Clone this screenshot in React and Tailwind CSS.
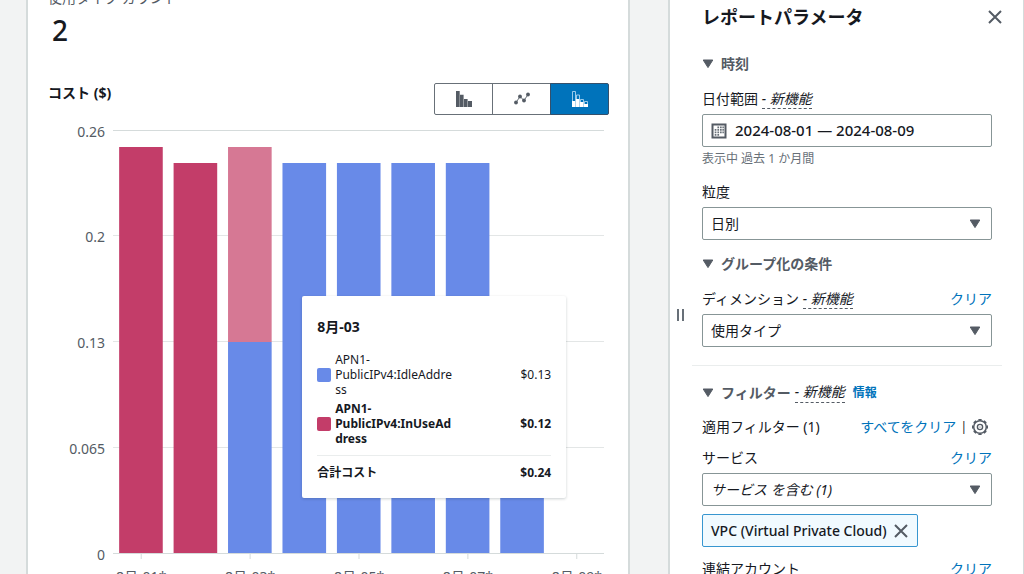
import React from "react";

const PLOT_TOP = 10;
const PLOT_BOTTOM = 433;
const STEP = 100 / 9;

const ticks = [
  { label: "0.26", y: 10 },
  { label: "0.2", y: 115 },
  { label: "0.13", y: 221 },
  { label: "0.065", y: 327 },
  { label: "0", y: 433 },
];

const IN_USE = "#c33d69";
const IDLE = "#688ae8";

const days = [
  { label: "8月-01*", parts: [{ top: 27, bottom: 433, color: IN_USE }] },
  { label: "8月-02*", parts: [{ top: 43, bottom: 433, color: IN_USE }] },
  {
    label: "8月-03*",
    parts: [
      { top: 27, bottom: 222, color: "#d67894" },
      { top: 222, bottom: 433, color: IDLE },
    ],
  },
  { label: "8月-04*", parts: [{ top: 43, bottom: 433, color: IDLE }] },
  { label: "8月-05*", parts: [{ top: 43, bottom: 433, color: IDLE }] },
  { label: "8月-06*", parts: [{ top: 43, bottom: 433, color: IDLE }] },
  { label: "8月-07*", parts: [{ top: 43, bottom: 433, color: IDLE }] },
  { label: "8月-08*", parts: [{ top: 280, bottom: 433, color: IDLE }] },
  { label: "8月-09*", parts: [] },
];

function Caret({ className = "" }) {
  return (
    <svg viewBox="0 0 12 10" className={`h-[10px] w-3 shrink-0 fill-[#545b64] ${className}`} aria-hidden="true">
      <path d="M1.2 1h9.6L6 8.6z" stroke="#545b64" strokeLinejoin="round" />
    </svg>
  );
}

function Cross({ className = "" }) {
  return (
    <svg viewBox="0 0 16 16" className={className} fill="none" stroke="#545b64" strokeWidth="2" aria-hidden="true">
      <path d="M2 2l12 12M14 2L2 14" />
    </svg>
  );
}

function NewFeature() {
  return (
    <span className="border-b border-dashed border-[#545b64] font-normal italic text-[#16191f]">- 新機能</span>
  );
}

function ClearLink({ children = "クリア" }) {
  return (
    <a href="#clear" className="text-[#0073bb]">
      {children}
    </a>
  );
}

function SectionTitle({ children, className = "" }) {
  return (
    <h3 className={`flex items-center gap-[7px] font-bold leading-5 text-[#545b64] ${className}`}>
      <Caret />
      <span className="flex items-center gap-1">{children}</span>
    </h3>
  );
}

function SelectBox({ id, value, italic }) {
  return (
    <div className="relative mt-[5px]">
      <select
        id={id}
        className={`block h-[33px] w-full appearance-none rounded-[2px] border border-[#879596] bg-white px-2 text-[#16191f] ${italic ? "italic" : ""}`}
      >
        <option>{value}</option>
      </select>
      <Caret className="pointer-events-none absolute right-[11px] top-[12px]" />
    </div>
  );
}

function CalendarIcon() {
  return (
    <svg viewBox="0 0 16 16" className="size-4 shrink-0" fill="none" aria-hidden="true">
      <rect x="1.5" y="1.5" width="13" height="13" stroke="#545b64" strokeWidth="2" />
      <g fill="#687078">
        <path d="M6.4 3.6h1.7v1.7H6.4zM9 3.6h1.7v1.7H9zM11.4 3.6h1.5v1.7h-1.5zM3.7 6.1h1.7v1.7H3.7zM6.4 6.1h1.7v1.7H6.4zM9 6.1h1.7v1.7H9zM11.4 6.1h1.5v1.7h-1.5zM3.7 8.6h1.7v1.7H3.7zM6.4 8.6h1.7v1.7H6.4zM9 8.6h1.7v1.7H9zM11.4 8.6h1.5v1.7h-1.5zM3.7 11.1h1.7v1.7H3.7zM6.4 11.1h1.7v1.7H6.4z" />
      </g>
    </svg>
  );
}

function GearIcon() {
  const teeth = [0, 45, 90, 135, 180, 225, 270, 315];
  return (
    <svg viewBox="0 0 18 18" className="size-[18px]" fill="none" stroke="#545b64" aria-hidden="true">
      <circle cx="9" cy="9" r="6.3" strokeWidth="1.5" />
      {teeth.map((a) => (
        <path key={a} d="M8 1.8h2" strokeWidth="1.6" strokeLinecap="round" transform={`rotate(${a} 9 9)`} />
      ))}
      <circle cx="9" cy="9" r="2.6" strokeWidth="1.4" />
      <circle cx="9" cy="9" r="0.6" fill="#545b64" stroke="none" />
    </svg>
  );
}

function BarsIcon() {
  return (
    <svg viewBox="0 0 16 16" className="size-4" fill="#545b64" aria-hidden="true">
      <path d="M0 0h3.7v16H0zM4 3.8h3.6v12.2H4zM8 8h3.6v8H8zM12 10h4v6h-4z" />
    </svg>
  );
}

function LineIcon() {
  return (
    <svg viewBox="0 0 16 16" className="size-4" fill="#545b64" aria-hidden="true">
      <path d="M2 11.5L6 5.5l4 4 4-6" fill="none" stroke="#687078" strokeWidth="1" />
      <circle cx="2" cy="11.5" r="1.9" />
      <circle cx="6" cy="5.5" r="1.9" />
      <circle cx="10" cy="9.5" r="1.9" />
      <circle cx="14" cy="3.5" r="1.9" />
    </svg>
  );
}

function StackIcon() {
  return (
    <svg viewBox="0 0 16 16" className="size-4" fill="none" aria-hidden="true">
      <path d="M.5 10V.5h3V10M4.5 8V4h3v4M8.500 11.500V8.500h3v3M12.500 13.500v-3h3v3" stroke="#a9d2ee" strokeWidth="0.9" />
      <path d="M0 10h3.7v6H0zM4 8h3.7v8H4zM8 11h3.7v5H8zM12 13h4v3h-4z" fill="#fff" />
    </svg>
  );
}

function ChartTypes() {
  return (
    <div className="flex" role="group" aria-label="グラフの種類">
      <button aria-label="棒" className="flex h-8 w-[59px] items-center justify-center rounded-l-[2px] border border-[#687078] bg-white">
        <BarsIcon />
      </button>
      <button aria-label="折れ線" className="-ml-px flex h-8 w-[59px] items-center justify-center border border-[#687078] bg-white">
        <LineIcon />
      </button>
      <button aria-label="積み重ね" className="-ml-px flex h-8 w-[59px] items-center justify-center rounded-r-[2px] border border-[#35506b] bg-[#0073bb]">
        <StackIcon />
      </button>
    </div>
  );
}

function TooltipRow({ color, name, value, bold }) {
  return (
    <li className={`mb-1 flex items-center ${bold ? "font-bold" : ""}`}>
      <span className={`mr-1 size-[14px] shrink-0 rounded-[2px] ${color}`} />
      <span className="w-[122px] break-words">{name}</span>
      <span className="ml-auto">{value}</span>
    </li>
  );
}

function Tooltip() {
  return (
    <div
      role="tooltip"
      className="absolute left-[38.4%] top-[176px] w-[264px] rounded-[2px] bg-white px-[15px] pb-[18px] pt-[21px] text-xs leading-[15px] text-[#16191f] shadow-[0_1px_3px_rgba(0,28,36,0.2)]"
    >
      <h4 className="mb-[15px] text-sm font-bold leading-5">8月-03</h4>
      <ul>
        <TooltipRow color="bg-[#688ae8]" name="APN1-PublicIPv4:IdleAddress" value="$0.13" />
        <TooltipRow color="bg-[#c33d69]" name="APN1-PublicIPv4:InUseAddress" value="$0.12" bold />
      </ul>
      <div className="mt-[9px] flex justify-between border-t border-[#eaeded] pt-[9px] font-bold">
        <span>合計コスト</span>
        <span>$0.24</span>
      </div>
    </div>
  );
}

function Chart() {
  return (
    <div className="mt-[5px] flex pr-[5px]">
      <svg className="h-[480px] w-[66px] shrink-0 fill-[#545b64] text-sm" aria-hidden="true">
        {ticks.map((t) => (
          <text key={t.label} x="57" y={t.y + 7} textAnchor="end">
            {t.label}
          </text>
        ))}
      </svg>
      <div className="relative flex-1">
        <svg className="block h-[480px] w-full overflow-visible fill-[#545b64] text-sm" role="img" aria-label="コスト ($)">
          {ticks.map((t) => (
            <line key={t.label} x1="-1" x2="100%" y1={t.y + 0.5} y2={t.y + 0.5} stroke={t.y === PLOT_TOP || t.y === PLOT_BOTTOM ? "#d5dbdb" : "#e3e6e6"} strokeWidth="1" />
          ))}
          {days.map((d, i) => (
            <g key={d.label}>
              {d.parts.map((p) => (
                <rect key={p.top} x={`${i * STEP + 1.05}%`} width="8.9%" y={p.top} height={p.bottom - p.top} fill={p.color} />
              ))}
              {i % 2 === 0 && (
                <>
                  <line x1={`${(i + 0.5) * STEP}%`} x2={`${(i + 0.5) * STEP}%`} y1="434" y2="439" stroke="#d5dbdb" />
                  <text x={`${(i + 0.5) * STEP}%`} y="462" textAnchor="middle">
                    {d.label}
                  </text>
                </>
              )}
            </g>
          ))}
        </svg>
        <Tooltip />
      </div>
    </div>
  );
}

export default function App() {
  return (
    <div className="flex h-screen overflow-hidden bg-[#f2f3f3] font-['Noto_Sans','Noto_Sans_CJK_JP',sans-serif] text-sm text-[#16191f]">
      <main className="min-w-0 flex-1 pl-[26px] pr-[38px]">
        <section className="-mt-3 border-x-2 border-[#d5dbdb] bg-white pb-8 pl-5 pr-[19px]">
          <p className="leading-5 text-[#545b64]">使用タイプ カウント</p>
          <p className="mt-1 px-1 text-[28px] font-medium leading-9">2</p>
          <div className="mt-[35px] flex items-start justify-between">
            <h2 className="font-bold leading-5">コスト ($)</h2>
            <ChartTypes />
          </div>
          <Chart />
        </section>
      </main>

      <aside className="flex w-[356px] shrink-0 border-l-2 border-r border-[#d5dbdb] bg-white">
        <div className="flex w-[22px] items-center justify-center pr-[2px] pt-14">
          <button aria-label="サイズ変更" className="flex gap-[3px]">
            <span className="h-3 w-[2px] bg-[#687078]" />
            <span className="h-3 w-[2px] bg-[#687078]" />
          </button>
        </div>
        <div className="min-w-0 flex-1 pr-[21px]">
          <div className="px-[10px]">
            <div className="-mr-[11px] flex items-center justify-between pt-[7px]">
              <h2 className="text-lg font-bold leading-5">レポートパラメータ</h2>
              <button aria-label="閉じる">
                <Cross className="size-4" />
              </button>
            </div>

            <SectionTitle className="mt-[27px]">時刻</SectionTitle>
            <label htmlFor="range" className="mt-[15px] block leading-5">
              日付範囲 <NewFeature />
            </label>
            <button id="range" className="mt-[5px] flex h-[33px] w-full items-center gap-2 rounded-[2px] border border-[#879596] bg-white px-2 text-[15px] font-medium">
              <CalendarIcon />
              2024-08-01 — 2024-08-09
            </button>
            <p className="mt-1 text-xs leading-4 text-[#687078]">表示中 過去 1 か月間</p>

            <label htmlFor="granularity" className="mt-[15px] block leading-5">粒度</label>
            <SelectBox id="granularity" value="日別" />

            <SectionTitle className="mt-[14px]">グループ化の条件</SectionTitle>
            <div className="mt-[15px] flex justify-between leading-5">
              <label htmlFor="dimension">
                ディメンション <NewFeature />
              </label>
              <ClearLink />
            </div>
            <SelectBox id="dimension" value="使用タイプ" />
          </div>

          <hr className="mt-[18px] border-[#eaeded]" />

          <div className="px-[10px]">
            <SectionTitle className="mt-4">
              フィルター <NewFeature />
              <a href="#info" className="ml-1 text-xs text-[#0073bb]">情報</a>
            </SectionTitle>
            <div className="mt-[14px] flex items-center justify-between leading-5">
              <span>適用フィルター (1)</span>
              <span className="flex items-center gap-1 pr-[3px]">
                <ClearLink>すべてをクリア</ClearLink>
                <span className="text-xs">|</span>
                <button aria-label="設定">
                  <GearIcon />
                </button>
              </span>
            </div>
            <div className="mt-[11px] flex justify-between leading-5">
              <label htmlFor="service">サービス</label>
              <ClearLink />
            </div>
            <SelectBox id="service" value="サービス を含む (1)" italic />
            <div className="mt-2 flex">
              <span className="flex h-[33px] items-center gap-[6px] rounded-[2px] border border-[#3796d0] bg-[#f1faff] px-2 font-medium">
                VPC (Virtual Private Cloud)
                <button aria-label="VPC (Virtual Private Cloud) を削除">
                  <Cross className="size-4" />
                </button>
              </span>
            </div>
            <div className="mt-3 flex justify-between leading-5">
              <span>連結アカウント</span>
              <ClearLink />
            </div>
          </div>
        </div>
      </aside>
    </div>
  );
}
